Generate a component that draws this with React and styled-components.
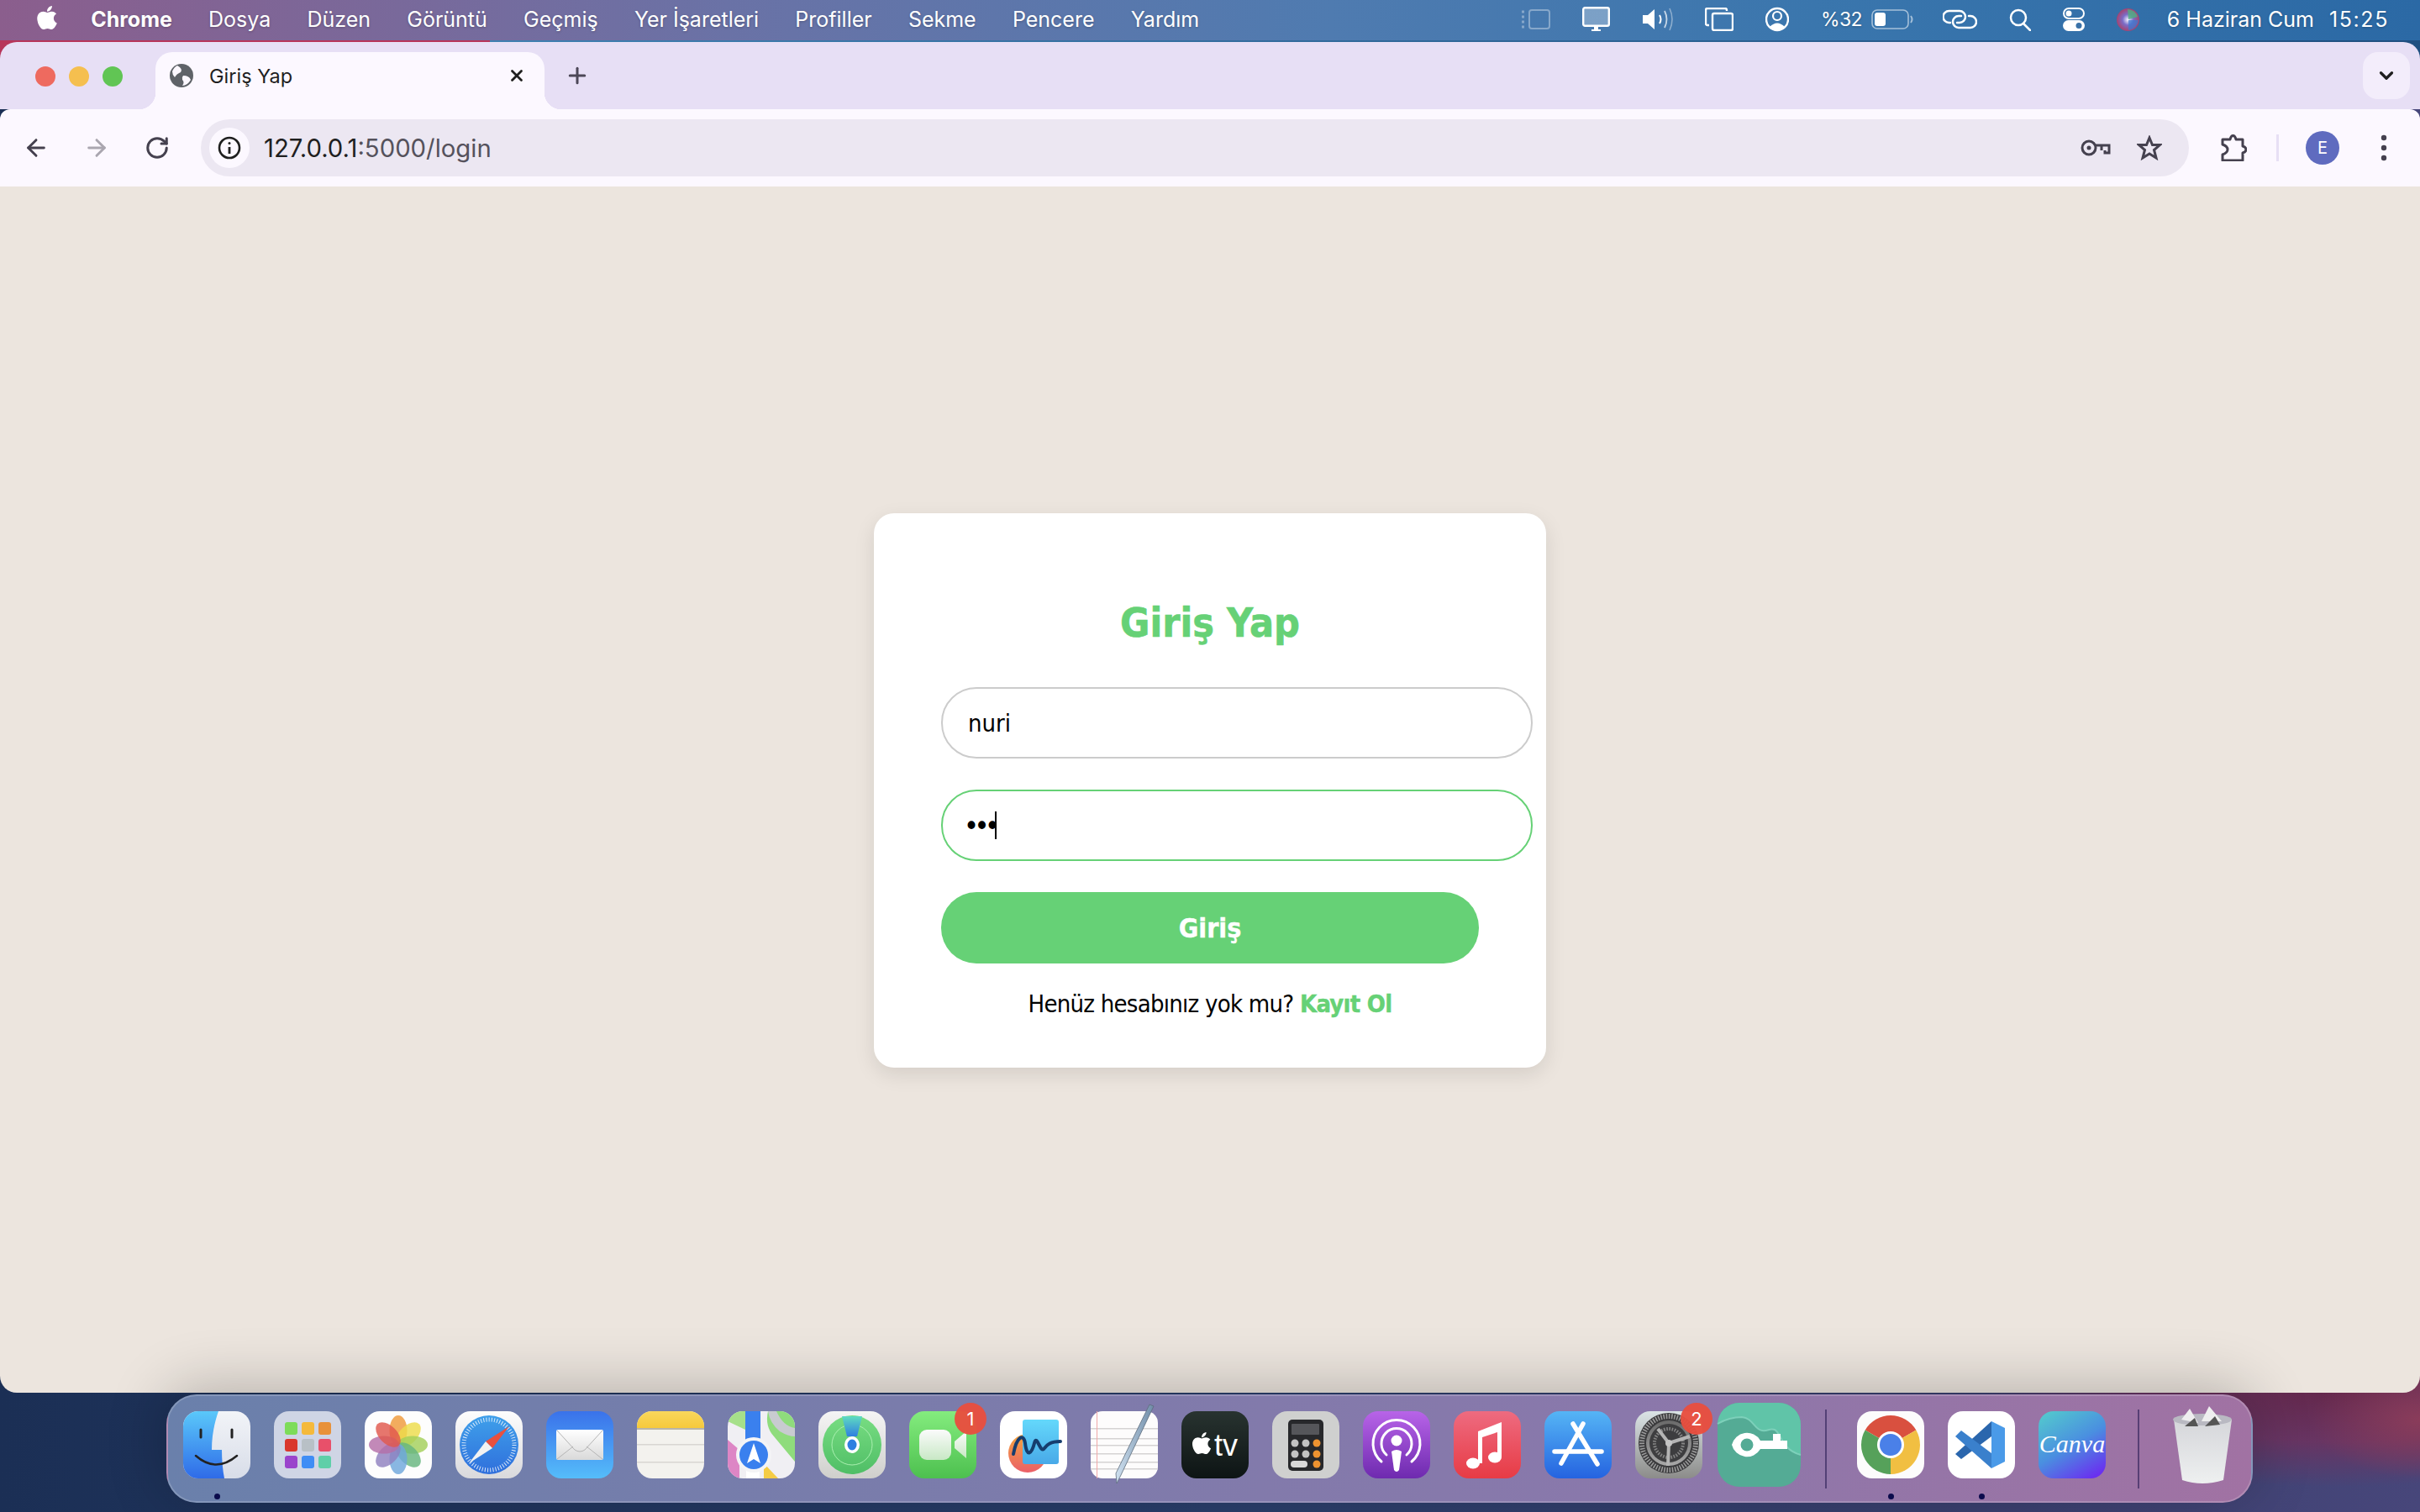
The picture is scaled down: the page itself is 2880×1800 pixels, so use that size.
import styled, { createGlobalStyle } from "styled-components";
import { FaApple } from "react-icons/fa";
import { ArrowLeft, ArrowRight, RotateCw, X, Plus, ChevronDown } from "lucide-react";

const GlobalStyle = createGlobalStyle`
  html, body {
    margin: 0;
    padding: 0;
  }
  body {
    font-family: "Inter", "Liberation Sans", sans-serif;
    background: #1d2f57;
  }
`;

const Desktop = styled.div`
  width: 2880px;
  height: 1800px;
  display: flex;
  flex-direction: column;
  overflow: hidden;
  background:
    linear-gradient(90deg, #b7355a 583px, #3f7fb0 583px, #1f4f80 2880px) top / 100% 70px no-repeat,
    radial-gradient(ellipse 130px 70px at 2880px 1690px, #8a3c5a 0, rgba(138, 60, 90, 0) 100%),
    radial-gradient(ellipse 420px 120px at 2780px 1650px, #632649 0, rgba(110, 50, 95, 0.85) 55%, rgba(80, 60, 110, 0) 100%),
    linear-gradient(90deg, #1b2f55 0, #2a3f6c 50%, #3a4070 80%, #47467a 100%);
`;

const MenuBar = styled.header`
  height: 48px;
  margin-bottom: 2px;
  flex: none;
  display: flex;
  align-items: center;
  justify-content: space-between;
  padding: 0 37px 2px 41px;
  box-sizing: border-box;
  color: #fff;
  background: linear-gradient(90deg, #8b5e8d 0, #6a72a6 30%, #4f7bb0 55%, #3a76ad 75%, #2b69a5 100%);
  text-shadow: 0 1px 3px rgba(0, 0, 0, 0.25);
`;

const MenuGroup = styled.nav`
  display: flex;
  align-items: center;
  gap: 43.2px;
`;

const AppleMark = styled(FaApple)`
  width: 30px;
  height: 32px;
  margin: -4px -6px 0 0;
`;

const MenuLabel = styled.span`
  font-size: 25px;
  font-weight: ${(p) => (p.$bold ? 700 : 400)};
  white-space: nowrap;
`;

const StatusGroup = styled.div`
  display: flex;
  align-items: center;
  gap: 38px;
  color: #fff;
`;

const StatusText = styled.span`
  font-size: ${(p) => p.$size || 25}px;
  letter-spacing: ${(p) => p.$track || 0}px;
  margin-right: ${(p) => p.$pull || 0}px;
  white-space: nowrap;
`;

const Window = styled.main`
  height: 1608px;
  flex: none;
  display: flex;
  flex-direction: column;
  border-radius: 20px;
  overflow: hidden;
`;

const TabStrip = styled.div`
  height: 80px;
  flex: none;
  display: flex;
  align-items: flex-end;
  padding: 0 12px 0 42px;
  background: #e7dff5;
`;

const Lights = styled.div`
  display: flex;
  gap: 16px;
  align-self: center;
  margin-top: 2px;
`;

const Light = styled.span`
  width: 24px;
  height: 24px;
  border-radius: 50%;
  background: ${(p) => p.$color};
`;

const Tab = styled.div`
  position: relative;
  width: 463px;
  height: 68px;
  margin-left: 39px;
  padding: 0 22px 12px 17px;
  box-sizing: border-box;
  display: flex;
  align-items: center;
  gap: 19px;
  background: #fcf8ff;
  border-radius: 20px 20px 0 0;
  font-size: 23.5px;
  color: #1f1f1f;

  &::before,
  &::after {
    content: "";
    position: absolute;
    bottom: 0;
    width: 20px;
    height: 20px;
  }
  &::before {
    left: -20px;
    background: radial-gradient(circle at 0 0, #e7dff5 20px, #fcf8ff 20.5px);
  }
  &::after {
    right: -20px;
    background: radial-gradient(circle at 100% 0, #e7dff5 20px, #fcf8ff 20.5px);
  }
`;

const TabTitle = styled.span`
  flex: 1;
`;

const NewTab = styled.span`
  display: flex;
  align-self: center;
  margin: 0 auto 0 24px;
  color: #4c4757;
`;

const TabMenu = styled.span`
  width: 56px;
  height: 56px;
  margin-bottom: 12px;
  display: flex;
  align-items: center;
  justify-content: center;
  border-radius: 18px;
  background: #f3edfb;
  color: #1f1f1f;
`;

const Toolbar = styled.div`
  height: 92px;
  flex: none;
  display: flex;
  align-items: center;
  padding: 0 19px;
  box-sizing: border-box;
  background: #fcf8ff;
  border-radius: 12px 12px 0 0;
`;

const NavButtons = styled.div`
  display: flex;
  gap: 24px;
  margin-right: 28px;
`;

const ToolButton = styled.span`
  width: 48px;
  height: 48px;
  display: flex;
  align-items: center;
  justify-content: center;
  color: ${(p) => (p.$muted ? "#aaa6b0" : "#45414f")};
`;

const Omnibox = styled.div`
  flex: 1;
  height: 68px;
  display: flex;
  align-items: center;
  padding: 0 32px 0 10px;
  border-radius: 34px;
  background: #ece7f2;
  margin-right: 29px;
`;

const SiteInfo = styled.span`
  width: 48px;
  height: 48px;
  border-radius: 50%;
  background: #fcf8ff;
  display: flex;
  align-items: center;
  justify-content: center;
  margin-right: 17px;
`;

const UrlText = styled.span`
  font-size: 29.3px;
  color: #1f1f1f;
  flex: 1;

  span {
    color: #55525c;
  }
`;

const OmniActions = styled.div`
  display: flex;
  align-items: center;
  gap: 31px;
  color: #45414f;
`;

const ToolbarSep = styled.span`
  width: 3px;
  height: 32px;
  margin: 0 32px 0 27px;
  background: #e7dff5;
`;

const Avatar = styled.span`
  width: 40px;
  height: 40px;
  border-radius: 50%;
  background: #5f6bbf;
  color: #fff;
  font-size: 20px;
  display: flex;
  align-items: center;
  justify-content: center;
  margin-right: 29px;
`;

const Content = styled.section`
  flex: 1;
  display: flex;
  align-items: center;
  justify-content: center;
  padding-top: 2px;
  background: #ece5de;
`;

const Card = styled.div`
  width: 800px;
  height: 660px;
  padding: 0 80px;
  box-sizing: border-box;
  background: #fff;
  border-radius: 24px;
  box-shadow: 0 8px 24px rgba(0, 0, 0, 0.1);
  font-family: "DejaVu Sans", "Liberation Sans", sans-serif;
  font-stretch: condensed;
  text-align: center;
`;

const Title = styled.h2`
  margin: 100px 0 47px;
  font-size: 48px;
  line-height: 60px;
  font-weight: 700;
  color: #66d176;
  -webkit-text-stroke: 0.6px #66d176;
`;

const Field = styled.div`
  position: relative;
  margin-bottom: 37px;
  height: 85px;
`;

const TextInput = styled.input`
  display: block;
  width: 100%;
  height: 81px;
  padding: 0 30px;
  border: 2px solid ${(p) => (p.$focused ? "#66d176" : "#cccccc")};
  border-radius: 42px;
  outline: none;
  background: #fff;
  font: inherit;
  font-stretch: condensed;
  font-size: 29px;
  color: #000;
  text-align: left;

  &[type="password"] {
    padding: 0 35px 0 25px;
    font-size: 34px;
    letter-spacing: -5.5px;
  }
`;

const Caret = styled.span`
  position: absolute;
  left: 64px;
  top: 26px;
  width: 2px;
  height: 33px;
  background: #000;
`;

const SubmitButton = styled.button`
  display: block;
  width: 100%;
  height: 85px;
  border: 0;
  border-radius: 42px;
  background: #66d176;
  color: #fff;
  font: inherit;
  font-stretch: condensed;
  font-size: 32px;
  font-weight: 700;
  -webkit-text-stroke: 0.4px #fff;
`;

const SignupLine = styled.p`
  margin: 28px 0 0;
  font-size: 29px;
  letter-spacing: -0.75px;
  line-height: 40px;
  color: #000;
`;

const SignupLink = styled.a`
  color: #66d176;
  font-weight: 700;
  text-decoration: none;
  -webkit-text-stroke: 0.4px #66d176;
`;

const DockShelf = styled.div`
  margin-top: 2px;
  display: flex;
  justify-content: center;
`;

const DockBar = styled.div`
  height: 129px;
  box-sizing: border-box;
  display: flex;
  align-items: center;
  padding: 0 20px 9px 18px;
  margin-left: -1px;
  border: 2px solid rgba(255, 255, 255, 0.18);
  border-radius: 36px;
  background: linear-gradient(90deg, #6a80ab 0, #7a7cab 35%, #8a78ab 70%, #a172a3 100%);
  box-shadow: 0 -8px 70px rgba(0, 0, 0, 0.24);
`;

const DockGroup = styled.div`
  display: flex;
  align-items: center;
  gap: 28px;
`;

const DockItem = styled.div`
  position: relative;
  flex: none;
  width: ${(p) => p.$w || 80}px;
  height: ${(p) => p.$h || 80}px;
  margin-left: ${(p) => p.$before || 0}px;

  svg {
    display: block;
    overflow: visible;
  }
`;

const RunDot = styled.span`
  position: absolute;
  left: 50%;
  bottom: -25px;
  width: 7px;
  height: 7px;
  margin-left: -3px;
  border-radius: 50%;
  background: #0b0b4c;
`;

const Badge = styled.span`
  position: absolute;
  top: -10px;
  right: -12px;
  width: 38px;
  height: 38px;
  border-radius: 50%;
  background: rgba(232, 78, 62, 0.96);
  color: #fff;
  font-size: 22px;
  display: flex;
  align-items: center;
  justify-content: center;
`;

const DockDivider = styled.span`
  flex: none;
  width: 2px;
  height: 94px;
  margin: 10px ${(p) => p.$after}px 0 ${(p) => p.$before}px;
  background: rgba(50, 35, 90, 0.65);
`;

const BatteryFrame = styled.svg`
  margin-left: -27px;
`;

const LinkFrame = styled.svg`
  margin-left: -3px;
`;

const SiriFrame = styled.svg`
  margin-right: -5px;
`;

const IconBox = ({ children }) => (
  <svg width="80" height="80" viewBox="0 0 80 80">
    {children}
  </svg>
);

const Grad = ({ id, from, to, x2 = 0, y2 = 1 }) => (
  <linearGradient id={id} x1="0" y1="0" x2={x2} y2={y2}>
    <stop offset="0" stopColor={from} />
    <stop offset="1" stopColor={to} />
  </linearGradient>
);

const Finder = () => (
  <IconBox>
    <defs>
      <Grad id="fL" from="#5ac8fa" to="#2f6be8" />
      <Grad id="fR" from="#f2f4f8" to="#d8dde8" />
    </defs>
    <rect width="80" height="80" rx="18" fill="url(#fR)" />
    <path d="M18 0H42C37 14 34 30 34 46H46C46 58 47 70 49 80H18A18 18 0 0 1 0 62V18A18 18 0 0 1 18 0Z" fill="url(#fL)" />
    <path d="M21 22V31M58 22V31" stroke="#222" strokeWidth="3" strokeLinecap="round" />
    <path d="M15 53Q39 74 64 53" fill="none" stroke="#222" strokeWidth="2.5" strokeLinecap="round" />
  </IconBox>
);

const launchColors = ["#7ddc5a", "#f5b93b", "#e8913a", "#d9372d", "#b8c0c6", "#e8506a", "#9a44cc", "#3f8df5", "#5fcfa8"];

const Launchpad = () => (
  <IconBox>
    <rect width="80" height="80" rx="18" fill="#cfd5e5" />
    {launchColors.map((c, i) => (
      <rect key={c} x={13 + (i % 3) * 20} y={13 + Math.floor(i / 3) * 20} width="15" height="15" rx="3" fill={c} />
    ))}
  </IconBox>
);

const petals = ["#ef9a3a", "#eddc4a", "#a4cf5a", "#67b67f", "#6fa7dc", "#8f80c0", "#b56fa8", "#e0584d"];

const Photos = () => (
  <IconBox>
    <rect width="80" height="80" rx="18" fill="#fdfdfd" />
    {petals.map((c, i) => (
      <ellipse key={c} cx="40" cy="23" rx="10.5" ry="18" fill={c} opacity="0.82" transform={`rotate(${i * 45} 40 40)`} />
    ))}
  </IconBox>
);

const Safari = () => (
  <IconBox>
    <defs>
      <Grad id="sfB" from="#fdfdfd" to="#d9d9dc" />
      <Grad id="sfC" from="#3fa0ea" to="#2f6fdc" />
    </defs>
    <rect width="80" height="80" rx="18" fill="url(#sfB)" />
    <circle cx="40" cy="40" r="35" fill="url(#sfC)" />
    <circle cx="40" cy="40" r="30" fill="none" stroke="#fff" strokeWidth="5" strokeDasharray="1 2.2" opacity="0.8" />
    <path d="M64 18L36 36L44 44Z" fill="#e8503f" />
    <path d="M16 62L36 36L44 44Z" fill="#f2f2f2" />
  </IconBox>
);

const Mail = () => (
  <IconBox>
    <defs>
      <Grad id="mlB" from="#3a72ea" to="#55bdfa" />
      <Grad id="mlE" from="#ffffff" to="#d9d9d9" />
    </defs>
    <rect width="80" height="80" rx="18" fill="url(#mlB)" />
    <rect x="12" y="22" width="56" height="36" rx="2" fill="url(#mlE)" />
    <path d="M13 23L34 46Q40 50 46 46L67 23M13 57L32 42M67 57L48 42" fill="none" stroke="#b5b5b5" strokeWidth="1" />
  </IconBox>
);

const Notes = () => (
  <IconBox>
    <defs>
      <Grad id="ntT" from="#f9d75c" to="#f6c93b" />
      <clipPath id="ntC">
        <rect width="80" height="80" rx="18" />
      </clipPath>
    </defs>
    <g clipPath="url(#ntC)">
      <rect width="80" height="80" fill="#f3f2ee" />
      <rect width="80" height="20" fill="url(#ntT)" />
      <rect y="20" width="80" height="2" fill="#b9b5a8" />
      <rect y="39" width="80" height="1.5" fill="#d8d6d2" />
      <rect y="60" width="80" height="1.5" fill="#d8d6d2" />
    </g>
  </IconBox>
);

const Maps = () => (
  <IconBox>
    <defs>
      <clipPath id="mpC">
        <rect width="80" height="80" rx="18" />
      </clipPath>
    </defs>
    <g clipPath="url(#mpC)">
      <rect width="80" height="80" fill="#f0eff3" />
      <path d="M0 0H21V22L0 12Z" fill="#a6e08a" />
      <path d="M40 0H80V60L55 30Q44 18 48 0Z" fill="#8fdc7c" />
      <path d="M48 0Q50 14 62 24Q72 30 80 30V20Q66 18 58 0Z" fill="#c8cbd0" />
      <path d="M0 34L14 46V80H0Z" fill="#dd86c5" />
      <path d="M43 62L60 80H43Z" fill="#f5cc45" />
      <rect x="21" y="0" width="18" height="40" fill="#3a80ee" />
      <rect x="22" y="62" width="16" height="18" fill="#ffffff" />
      <circle cx="31" cy="52" r="21" fill="#f4f4f6" />
      <circle cx="31" cy="52" r="17" fill="#3a80ee" />
      <path d="M31 38L39 62L31 57L23 62Z" fill="#fff" />
    </g>
  </IconBox>
);

const FindMy = () => (
  <IconBox>
    <defs>
      <Grad id="fmB" from="#f5f5f5" to="#cfcfcc" />
      <Grad id="fmG" from="#78dd82" to="#4fbe66" />
      <Grad id="fmC" from="#5fdcc0" to="#2f7fe0" />
    </defs>
    <rect width="80" height="80" rx="18" fill="url(#fmB)" />
    <circle cx="40" cy="40" r="35" fill="url(#fmG)" />
    <circle cx="40" cy="40" r="24" fill="none" stroke="#aaf0b0" strokeWidth="1" />
    <path d="M28 6H52L46 30H34Z" fill="url(#fmC)" />
    <ellipse cx="40" cy="40" rx="9" ry="10" fill="#fff" />
    <ellipse cx="40" cy="40" rx="5.5" ry="6.5" fill="#2f7fe0" />
  </IconBox>
);

const FaceTime = () => (
  <IconBox>
    <defs>
      <Grad id="ftB" from="#84ec7e" to="#4dc04f" />
      <Grad id="ftC" from="#fbfbfb" to="#c8e8c5" />
    </defs>
    <rect width="80" height="80" rx="18" fill="url(#ftB)" />
    <rect x="12" y="22" width="38" height="36" rx="9" fill="url(#ftC)" />
    <path d="M54 36L68 24V56L54 44Z" fill="url(#ftC)" />
  </IconBox>
);

const Freeform = () => (
  <IconBox>
    <defs>
      <Grad id="ffO" from="#f5a63f" to="#ea5f68" />
      <Grad id="ffB" from="#64d8fb" to="#48a9e8" />
    </defs>
    <rect width="80" height="80" rx="18" fill="#fff" />
    <circle cx="33" cy="50" r="23" fill="url(#ffO)" />
    <rect x="27" y="10" width="43" height="53" rx="3" fill="url(#ffB)" />
    <path d="M16 51C20 30 28 26 30 38C32 56 38 50 41 38C44 26 48 52 53 44C56 40 60 36 72 36" fill="none" stroke="#163d6e" strokeWidth="4" strokeLinecap="round" />
  </IconBox>
);

const TextEdit = () => (
  <IconBox>
    <defs>
      <Grad id="tePen" from="#cfe0ef" to="#6f8ca8" x2="1" y2="0" />
    </defs>
    <rect width="80" height="80" rx="14" fill="#fdfcfc" />
    {[20, 32, 40, 50, 60, 68].map((y) => (
      <rect key={y} y={y} width="80" height="1.5" fill="#d5d3d3" />
    ))}
    <rect x="7" width="1" height="80" fill="#f0a8a8" />
    <path d="M70 -8L75 -6L36 76L31 86L30 74Z" fill="url(#tePen)" stroke="#5d6c7c" strokeWidth="0.8" />
  </IconBox>
);

const TvIcon = () => (
  <IconBox>
    <defs>
      <Grad id="tvB" from="#283330" to="#0d1414" />
    </defs>
    <rect width="80" height="80" rx="18" fill="url(#tvB)" />
    <FaApple x="9" y="23" size={30} color="#fff" />
    <text x="39" y="53" fontFamily="Liberation Sans, sans-serif" fontSize="36" fill="#fff">
      tv
    </text>
  </IconBox>
);

const Calculator = () => (
  <IconBox>
    <rect width="80" height="80" rx="18" fill="#cfd0cf" />
    <rect x="19" y="10" width="42" height="61" rx="5" fill="#27282b" />
    <rect x="23" y="15" width="33" height="13" rx="1" fill="#55565a" />
    {[0, 1].map((r) =>
      [0, 1, 2].map((c) => (
        <circle key={`${r}${c}`} cx={27 + c * 13} cy={38 + r * 13} r="4.5" fill={c === 2 ? "#ee9330" : "#c3c3c3"} />
      )),
    )}
    <rect x="22" y="59" width="20" height="8" rx="4" fill="#d8d8d8" />
    <circle cx="53" cy="63" r="4.5" fill="#ee9330" />
  </IconBox>
);

const Podcasts = () => (
  <IconBox>
    <defs>
      <Grad id="pcB" from="#b864e8" to="#6e2aaf" />
    </defs>
    <rect width="80" height="80" rx="18" fill="url(#pcB)" />
    <path d="M22 60A28 28 0 1 1 58 60" fill="none" stroke="#fff" strokeWidth="3" strokeLinecap="round" />
    <path d="M28 52A18 18 0 1 1 52 52" fill="none" stroke="#fff" strokeWidth="3" strokeLinecap="round" />
    <circle cx="40" cy="35" r="6.5" fill="#fff" />
    <path d="M34 48Q40 44 46 48L43 70Q40 74 37 70Z" fill="#fff" />
  </IconBox>
);

const MusicIcon = () => (
  <IconBox>
    <defs>
      <Grad id="muB" from="#ee6b80" to="#e73b45" />
    </defs>
    <rect width="80" height="80" rx="18" fill="url(#muB)" />
    <path d="M29 24L57 13V54H52V25L34 31V62H29Z" fill="#fff" />
    <ellipse cx="23" cy="62" rx="8" ry="6.5" fill="#fff" />
    <ellipse cx="49" cy="55" rx="8" ry="6.5" fill="#fff" />
  </IconBox>
);

const AppStore = () => (
  <IconBox>
    <defs>
      <Grad id="asB" from="#55b5f5" to="#2563e0" />
    </defs>
    <rect width="80" height="80" rx="18" fill="url(#asB)" />
    <g stroke="#fff" strokeWidth="5.5" strokeLinecap="round">
      <path d="M34 15L63 63" />
      <path d="M46 15L20 62" />
      <path d="M12 48H68" />
    </g>
  </IconBox>
);

const SettingsIcon = () => (
  <IconBox>
    <defs>
      <Grad id="stB" from="#dbe4e6" to="#8c8c8a" />
      <Grad id="stR" from="#6a6a6a" to="#a8a8a8" />
    </defs>
    <rect width="80" height="80" rx="18" fill="url(#stB)" />
    <circle cx="40" cy="38" r="36" fill="#3a3a3c" />
    <circle cx="40" cy="38" r="32" fill="none" stroke="#9a9a9a" strokeWidth="6" strokeDasharray="1.6 1.6" />
    <circle cx="40" cy="38" r="27" fill="url(#stR)" />
    <circle cx="40" cy="38" r="23" fill="#3d3d3f" />
    <circle cx="40" cy="38" r="17" fill="none" stroke="#858585" strokeWidth="4" strokeDasharray="1.6 1.6" />
    <path d="M40 38L27 21M40 38L65 30M40 38L39 65" stroke="#b4b4b4" strokeWidth="4" />
    <circle cx="40" cy="38" r="4" fill="#c4c4c4" />
  </IconBox>
);

const KeyApp = () => (
  <svg width="99" height="100" viewBox="0 0 99 100">
    <rect width="99" height="100" rx="26" fill="#54ab95" />
    <path d="M0 25Q14 17 29 17C42 18 44 32 53 33C60 34 62 30 68 32C76 36 76 56 99 62V26A26 26 0 0 0 73 0H26A26 26 0 0 0 0 26Z" fill="#60c4a8" />
    <path d="M0 25Q14 17 29 17C42 18 44 32 53 33C60 34 62 30 68 32C76 36 76 56 99 62" fill="none" stroke="#7dd0ba" strokeWidth="2" />
    <path d="M17 50A18.500 18.500 0 0 1 51 45H66V37H75V45H83V55H51A18.500 18.500 0 0 1 17 50Z" fill="#fff" />
    <circle cx="35" cy="50" r="7.500" fill="#54ab95" />
  </svg>
);

const ChromeIcon = () => (
  <IconBox>
    <rect width="80" height="80" rx="18" fill="#fcfcfc" />
    <path d="M40 40L9.700 22.500A35 35 0 0 1 70.300 22.500Z" fill="#d9503f" />
    <path d="M40 40L70.300 22.500A35 35 0 0 1 40 75Z" fill="#f1bf42" />
    <path d="M40 40L40 75A35 35 0 0 1 9.700 22.500Z" fill="#56a15a" />
    <circle cx="40" cy="40" r="16" fill="#fff" />
    <circle cx="40" cy="40" r="13" fill="#4a80e8" />
  </IconBox>
);

const VsCode = () => (
  <IconBox>
    <rect width="80" height="80" rx="18" fill="#fff" />
    <path d="M52 12V30L16 57L9 51Z" fill="#2a66ad" />
    <path d="M9 30L16 23L52 50V68Z" fill="#3a80cc" />
    <path d="M52 12L68 20V60L52 68Z" fill="#4a9ae8" />
  </IconBox>
);

const CanvaIcon = () => (
  <IconBox>
    <defs>
      <linearGradient id="cvB" x1="0.2" y1="0" x2="0.8" y2="1">
        <stop offset="0" stopColor="#52c4cf" />
        <stop offset="0.5" stopColor="#4a8fe0" />
        <stop offset="1" stopColor="#6a2ff0" />
      </linearGradient>
    </defs>
    <rect width="80" height="80" rx="18" fill="url(#cvB)" />
    <text x="40" y="49" textAnchor="middle" fontFamily="Liberation Serif, serif" fontStyle="italic" fontSize="30" fill="#fff">
      Canva
    </text>
  </IconBox>
);

const TrashIcon = () => (
  <svg width="75" height="93" viewBox="0 0 75 93">
    <defs>
      <Grad id="trB" from="#d5d6da" to="#eef0f0" />
    </defs>
    <path d="M3 16L72 16L62 88Q37 96 13 88Z" fill="url(#trB)" />
    <ellipse cx="37" cy="16" rx="35" ry="7" fill="#b9b9c2" />
    <path d="M12 16L22 3L32 20ZM36 18L45 0L60 18Z" fill="#eeeeef" />
    <path d="M16 24L28 14L32 24ZM40 24L52 12L58 22Z" fill="#555" />
  </svg>
);

const SidebarGlyph = () => (
  <svg width="36" height="24" viewBox="0 0 36 24" fill="none" stroke="#fff" strokeWidth="2" opacity="0.35">
    <rect x="11" y="1" width="24" height="22" rx="3" />
    <path d="M2 3H5M2 9H5M2 15H5M2 21H5" strokeWidth="3" />
  </svg>
);

const DisplayGlyph = () => (
  <svg width="33" height="30" viewBox="0 0 33 30">
    <rect x="1.200" y="1.200" width="30.600" height="21.600" rx="2" fill="#ffffff" fillOpacity="0.3" stroke="#fff" strokeWidth="2.400" />
    <path d="M14 24H19V27H22V29H11V27H14Z" fill="#fff" />
  </svg>
);

const VolumeGlyph = () => (
  <svg width="37" height="28" viewBox="0 0 37 28" fill="none" stroke="#fff">
    <path d="M1 9H7L15 2V26L7 19H1Z" fill="#fff" stroke="none" />
    <path d="M21 9Q24 14 21 19" strokeWidth="2" />
    <path d="M27 4Q32 14 27 24" strokeWidth="1.800" opacity="0.7" />
    <path d="M33 1Q39 14 33 27" strokeWidth="1.600" opacity="0.4" />
  </svg>
);

const StackGlyph = () => (
  <svg width="34" height="28" viewBox="0 0 34 28" fill="none" stroke="#fff" strokeWidth="2.400">
    <rect x="9" y="7" width="24" height="20" rx="2" />
    <path d="M5 21H3A2 2 0 0 1 1 19V3A2 2 0 0 1 3 1H24A2 2 0 0 1 26 3V4" />
  </svg>
);

const UserGlyph = () => (
  <svg width="28" height="30" viewBox="0 0 28 30">
    <circle cx="14" cy="15" r="13" fill="none" stroke="#fff" strokeWidth="2.400" />
    <circle cx="14" cy="11" r="5" fill="none" stroke="#fff" strokeWidth="2.200" />
    <path d="M5 24Q14 15 23 24Q14 32 5 24Z" fill="#fff" />
  </svg>
);

const BatteryGlyph = () => (
  <BatteryFrame width="50" height="24" viewBox="0 0 50 24">
    <rect x="1" y="1" width="43" height="22" rx="6" fill="none" stroke="#fff" strokeWidth="1.600" opacity="0.55" />
    <rect x="4" y="4" width="13" height="16" rx="3" fill="#fff" />
    <path d="M47 8Q50 12 47 16" fill="none" stroke="#fff" strokeWidth="2" opacity="0.55" />
  </BatteryFrame>
);

const LinkGlyph = () => (
  <LinkFrame width="41" height="24" viewBox="0 0 41 24" fill="none" stroke="#fff" strokeWidth="2.500" strokeLinecap="round">
    <path d="M9 16H7.500A7 7 0 0 1 7.500 2H20A7 7 0 0 1 20 16H17" />
    <path d="M31 8H33A7 7 0 0 1 33 22H19A7 7 0 0 1 19 8H22" />
  </LinkFrame>
);

const SearchGlyph = () => (
  <svg width="26" height="27" viewBox="0 0 26 27" fill="none" stroke="#fff" strokeWidth="2.500">
    <circle cx="11" cy="11" r="9" />
    <path d="M17 18L25 26" strokeLinecap="round" />
  </svg>
);

const ControlGlyph = () => (
  <svg width="26" height="28" viewBox="0 0 26 28">
    <rect x="1" y="1" width="24" height="12" rx="6" fill="none" stroke="#fff" strokeWidth="2" />
    <circle cx="7" cy="7" r="3.500" fill="#fff" />
    <rect x="0" y="15" width="26" height="13" rx="6.500" fill="#fff" />
    <circle cx="19" cy="21.500" r="3.500" fill="#3a72a8" />
  </svg>
);

const SiriGlyph = () => (
  <SiriFrame width="27" height="27" viewBox="0 0 27 27">
    <defs>
      <radialGradient id="siriG" cx="0.5" cy="0.5" r="0.6">
        <stop offset="0" stopColor="#f2f2ff" />
        <stop offset="0.4" stopColor="#7a6cc8" />
        <stop offset="1" stopColor="#b5334e" />
      </radialGradient>
    </defs>
    <circle cx="13.500" cy="13.500" r="13.500" fill="url(#siriG)" />
    <path d="M13 1A13 13 0 0 1 25 10L14 13Z" fill="#4fb080" opacity="0.8" />
    <path d="M26 14A13 13 0 0 1 14 26L14 14Z" fill="#3a7ad0" opacity="0.7" />
  </SiriFrame>
);

const GlobeIcon = () => (
  <svg width="28" height="28" viewBox="0 0 28 28">
    <circle cx="14" cy="14" r="14" fill="#5f6368" />
    <path d="M9 2Q16 6 13 10Q8 12 6 16Q3 13 3 9Q5 4 9 2ZM16 14Q23 14 25 19Q21 26 15 26Q18 22 15 19Q14 16 16 14Z" fill="#fcf8ff" />
  </svg>
);

const InfoIcon = () => (
  <svg width="28" height="28" viewBox="0 0 28 28" fill="none" stroke="#1f1f1f">
    <circle cx="14" cy="14" r="12" strokeWidth="2.600" />
    <path d="M14 13V21" strokeWidth="2.800" />
    <circle cx="14" cy="8.500" r="1.500" fill="#1f1f1f" stroke="none" />
  </svg>
);

const KeyIcon = () => (
  <svg width="36" height="24" viewBox="0 0 36 24" fill="none" stroke="#45414f" strokeWidth="3">
    <circle cx="10" cy="12" r="8" />
    <circle cx="10" cy="12" r="2.500" fill="#45414f" stroke="none" />
    <path d="M18 9H34V18H29V15M25 9V15" />
  </svg>
);

const StarIcon = () => (
  <svg width="30" height="30" viewBox="0 0 30 30" fill="none" stroke="#45414f" strokeWidth="3">
    <path d="M15 3L18.500 11.500H27.500L20.500 17.500L23 27L15 22L7 27L9.500 17.500L2.500 11.500H11.500Z" />
  </svg>
);

const PuzzleIcon = () => (
  <svg width="32" height="32" viewBox="0 0 32 32" fill="none" stroke="#45414f" strokeWidth="3" strokeLinejoin="round">
    <path d="M3 6H12Q13 1.500 15.500 1.500Q18 1.500 19 6H27V14Q31 15 31 18Q31 21 27 22V31H3V24Q9 22 9 18Q9 14 3 12Z" />
  </svg>
);

const KebabIcon = () => (
  <svg width="10" height="34" viewBox="0 0 10 34" fill="#45414f">
    <circle cx="5" cy="5" r="3.200" />
    <circle cx="5" cy="17" r="3.200" />
    <circle cx="5" cy="29" r="3.200" />
  </svg>
);

const mainApps = [
  { id: "finder", Icon: Finder, running: true },
  { id: "launchpad", Icon: Launchpad },
  { id: "photos", Icon: Photos },
  { id: "safari", Icon: Safari },
  { id: "mail", Icon: Mail },
  { id: "notes", Icon: Notes },
  { id: "maps", Icon: Maps },
  { id: "findmy", Icon: FindMy },
  { id: "facetime", Icon: FaceTime, badge: "1" },
  { id: "freeform", Icon: Freeform },
  { id: "textedit", Icon: TextEdit },
  { id: "tv", Icon: TvIcon },
  { id: "calculator", Icon: Calculator },
  { id: "podcasts", Icon: Podcasts },
  { id: "music", Icon: MusicIcon },
  { id: "appstore", Icon: AppStore },
  { id: "settings", Icon: SettingsIcon, badge: "2" },
];

const recentApps = [
  { id: "chrome", Icon: ChromeIcon, running: true },
  { id: "vscode", Icon: VsCode, running: true },
  { id: "canva", Icon: CanvaIcon },
];

const renderApp = ({ id, Icon, running, badge }) => (
  <DockItem key={id}>
    <Icon />
    {badge && <Badge>{badge}</Badge>}
    {running && <RunDot />}
  </DockItem>
);

const menuItems = ["Dosya", "Düzen", "Görüntü", "Geçmiş", "Yer İşaretleri", "Profiller", "Sekme", "Pencere", "Yardım"];

export default function App() {
  return (
    <>
      <GlobalStyle />
      <Desktop>
        <MenuBar>
          <MenuGroup>
            <AppleMark />
            <MenuLabel $bold>Chrome</MenuLabel>
            {menuItems.map((item) => (
              <MenuLabel key={item}>{item}</MenuLabel>
            ))}
          </MenuGroup>
          <StatusGroup>
            <SidebarGlyph />
            <DisplayGlyph />
            <VolumeGlyph />
            <StackGlyph />
            <UserGlyph />
            <StatusText $size={23} $track={-0.7}>
              %32
            </StatusText>
            <BatteryGlyph />
            <LinkGlyph />
            <SearchGlyph />
            <ControlGlyph />
            <SiriGlyph />
            <StatusText $pull={-20}>6 Haziran Cum</StatusText>
            <StatusText $track={1.6}>15:25</StatusText>
          </StatusGroup>
        </MenuBar>

        <Window>
          <TabStrip>
            <Lights>
              <Light $color="#ee6a5f" />
              <Light $color="#f5bf4f" />
              <Light $color="#61c554" />
            </Lights>
            <Tab>
              <GlobeIcon />
              <TabTitle>Giriş Yap</TabTitle>
              <X size={22} strokeWidth={3} />
            </Tab>
            <NewTab>
              <Plus size={30} strokeWidth={2.4} />
            </NewTab>
            <TabMenu>
              <ChevronDown size={26} strokeWidth={3} />
            </TabMenu>
          </TabStrip>

          <Toolbar>
            <NavButtons>
              <ToolButton>
                <ArrowLeft size={32} strokeWidth={2.2} />
              </ToolButton>
              <ToolButton $muted>
                <ArrowRight size={32} strokeWidth={2.2} />
              </ToolButton>
              <ToolButton>
                <RotateCw size={30} strokeWidth={2.4} />
              </ToolButton>
            </NavButtons>
            <Omnibox>
              <SiteInfo>
                <InfoIcon />
              </SiteInfo>
              <UrlText>
                127.0.0.1<span>:5000/login</span>
              </UrlText>
              <OmniActions>
                <KeyIcon />
                <StarIcon />
              </OmniActions>
            </Omnibox>
            <ToolButton>
              <PuzzleIcon />
            </ToolButton>
            <ToolbarSep />
            <Avatar>E</Avatar>
            <ToolButton>
              <KebabIcon />
            </ToolButton>
          </Toolbar>

          <Content>
            <Card>
              <Title>Giriş Yap</Title>
              <Field>
                <TextInput type="text" defaultValue="nuri" />
              </Field>
              <Field>
                <TextInput type="password" defaultValue="123" $focused />
                <Caret />
              </Field>
              <SubmitButton type="button">Giriş</SubmitButton>
              <SignupLine>
                Henüz hesabınız yok mu? <SignupLink href="#">Kayıt Ol</SignupLink>
              </SignupLine>
            </Card>
          </Content>
        </Window>

        <DockShelf>
          <DockBar>
            <DockGroup>{mainApps.map(renderApp)}</DockGroup>
            <DockItem $w={99} $h={100} $before={18}>
              <KeyApp />
            </DockItem>
            <DockDivider $before={29} $after={36} />
            <DockGroup>{recentApps.map(renderApp)}</DockGroup>
            <DockDivider $before={38} $after={0} />
            <DockItem $w={75} $h={93} $before={38}>
              <TrashIcon />
            </DockItem>
          </DockBar>
        </DockShelf>
      </Desktop>
    </>
  );
}
